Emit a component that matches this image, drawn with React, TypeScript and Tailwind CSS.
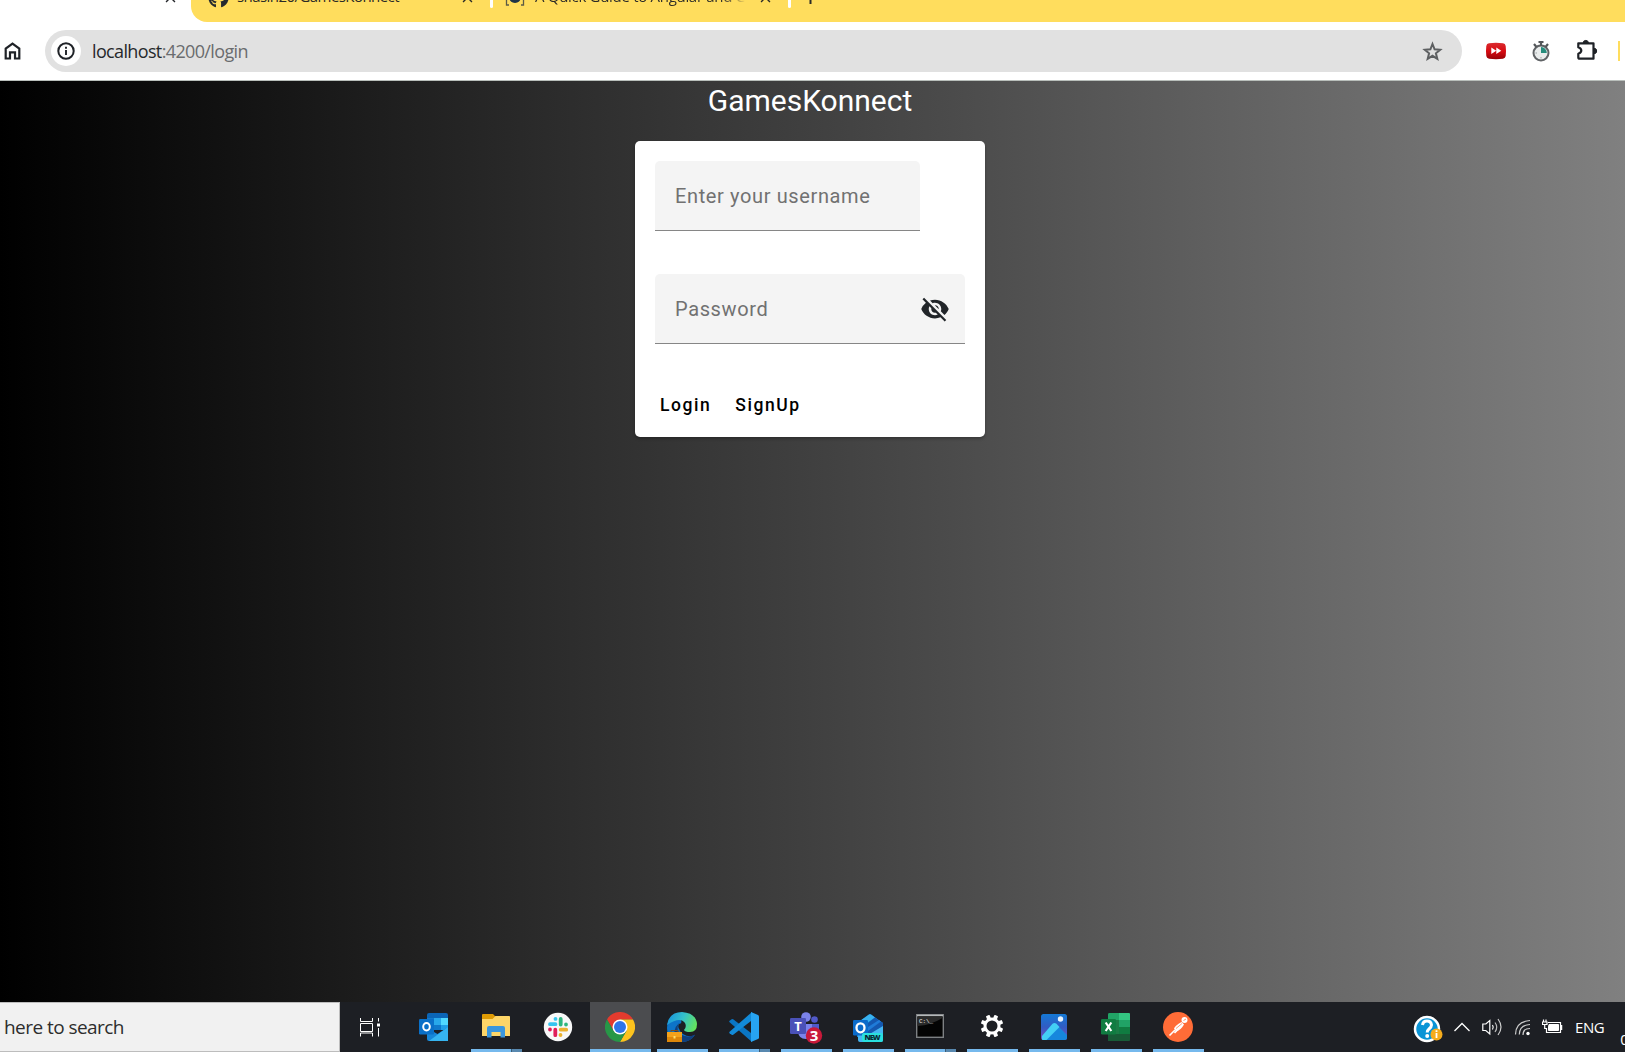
import React from "react";
import { MdClose, MdVisibilityOff } from "react-icons/md";
import { FaGithub } from "react-icons/fa";

function HomeIcon() {
  return (
    <svg width="18" height="20" viewBox="0 0 18 20" fill="none" stroke="#1f2227" strokeWidth="2.2">
      <path d="M1.700 17.500V7.500L8.500 2.500l6.800 5v10h-4.300v-6.200H6v6.200z" />
    </svg>
  );
}

function InfoIcon() {
  return (
    <svg width="18" height="18" viewBox="0 0 18 18">
      <circle cx="9" cy="9" r="7.700" fill="none" stroke="#1f2227" strokeWidth="2" />
      <path d="M9 8v5M9 4.800v1.900" stroke="#1f2227" strokeWidth="1.900" />
    </svg>
  );
}

function StarIcon() {
  return (
    <svg width="21" height="21" viewBox="0 0 21 21" fill="none" stroke="#5d5f61" strokeWidth="2">
      <path d="M10.500 3l2.100 5.300 5.600.4-4.300 3.600 1.400 5.500-4.800-3-4.800 3 1.400-5.500-4.300-3.600 5.600-.4z" />
    </svg>
  );
}

function SkipAdIcon() {
  return (
    <svg width="22" height="18" viewBox="0 0 22 18">
      <defs>
        <linearGradient id="skip" x1="0" y1="0" x2="0" y2="1">
          <stop offset="0" stopColor="#d92b2f" />
          <stop offset=".5" stopColor="#d90b12" />
          <stop offset="1" stopColor="#980207" />
        </linearGradient>
      </defs>
      <path d="M4 1.300Q11 .4 18 1.300q2.400.3 2.700 2.700.6 5 0 10-.3 2.300-2.700 2.700-7 .9-14 0Q1.600 16.300 1.300 14q-.6-5 0-10Q1.600 1.600 4 1.300z" fill="url(#skip)" />
      <path d="M6.300 5.500v6.400l5-3.200zM11.300 5.500v6.400l5-3.200z" fill="#fff" />
    </svg>
  );
}

function TimerIcon() {
  return (
    <svg width="20" height="22" viewBox="0 0 20 22">
      <circle cx="10" cy="13" r="7.500" fill="#e9ecec" stroke="#606366" strokeWidth="2" />
      <path d="M10 7v6h5.800A6 6 0 0 0 10 7z" fill="#258c7c" />
      <path d="M7.500 2h5M10 2v4M3 4l2.500 3M17 4l-2.500 3" stroke="#54575a" strokeWidth="2.200" />
      <path d="M10 17v1.500M4.500 13H6" stroke="#9da2a4" strokeWidth="1" />
    </svg>
  );
}

function PuzzleIcon() {
  return (
    <svg width="22" height="22" viewBox="0 0 22 22">
      <path d="M2.300 4.300h15.200v15.400H3.600q-1.300 0-1.300-1.300v-3.600c4-1.600 4-5 0-6.600z" fill="none" stroke="#1f2227" strokeWidth="2.200" strokeLinejoin="round" />
      <path d="M7.200 4a2.600 2.600 0 0 1 5.200 0zM18 9.300a2.700 2.700 0 0 1 0 5.400z" fill="#1f2227" stroke="#1f2227" />
    </svg>
  );
}

function OutlookIcon() {
  return (
    <svg width="30" height="28" viewBox="0 0 30 28">
      <path d="M8 2q0-2 2-2h17q2 0 2 2v13H8z" fill="#0b65b6" />
      <path d="M8 5h7v7H8z" fill="#1179cc" />
      <path d="M15 5h7v7h-7z" fill="#28a8ea" />
      <path d="M22 5h7v7h-7z" fill="#50d9ff" />
      <path d="M15 12h7v5h-7z" fill="#0f78ca" />
      <path d="M22 12h7v5h-7z" fill="#20a0e8" />
      <path d="M8 15l10.500 6L29 14v14H10q-2 0-2-2z" fill="#1686d8" />
      <path d="M29 14v14H10z" fill="#36b4f0" />
      <rect y="6" width="15" height="15.500" rx="1.300" fill="#0a70c8" />
      <ellipse cx="7.500" cy="13.800" rx="3.300" ry="3.700" fill="none" stroke="#fff" strokeWidth="2" />
    </svg>
  );
}

function FolderIcon() {
  return (
    <svg width="28" height="24" viewBox="0 0 28 24">
      <path d="M0 1q0-1 1-1h10l2.500 2.500H27q1 0 1 1V12H0z" fill="#df9b04" />
      <path d="M0 5h10.500L13.500 2H27q1 0 1 1v19H0z" fill="#fdd568" />
      <path d="M5 23.500V14q0-2 2-2h14q2 0 2 2v9.500h-4.500V18h-9v5.500z" fill="#3a96dd" />
    </svg>
  );
}

function SlackIcon() {
  return (
    <svg width="30" height="30" viewBox="0 0 30 30">
      <circle cx="15" cy="15" r="14.200" fill="#f8f8f8" />
      <g fill="none" strokeWidth="3.800" strokeLinecap="round">
        <path d="M7 12.200h5.500M12.500 6.800v.1" stroke="#36c5f0" />
        <path d="M17.700 7v5.500M23 12.500v.1" stroke="#2eb67d" />
        <path d="M17.700 17.700h5.500M17.500 23v.1" stroke="#ecb22e" />
        <path d="M12.300 17.700v5.500M7 17.500v.1" stroke="#e01e5a" />
      </g>
    </svg>
  );
}

function ChromeIcon() {
  return (
    <svg width="30" height="30" viewBox="0 0 30 30">
      <path d="M2 7.500A15 15 0 0 1 28 7.500H15L8.500 18.700z" fill="#e33b2e" />
      <path d="M28 7.500A15 15 0 0 1 15 30l6.500-11.300L15 7.500z" fill="#fcc31e" />
      <path d="M15 30A15 15 0 0 1 2 7.500l6.500 11.200h13z" fill="#279747" />
      <circle cx="15" cy="15" r="7.500" fill="#fff" />
      <circle cx="15" cy="15" r="6" fill="#2e75e8" />
    </svg>
  );
}

function EdgeIcon() {
  return (
    <svg width="32" height="31" viewBox="0 0 32 31">
      <defs>
        <linearGradient id="edgeTop" x1="0" y1=".3" x2="1" y2=".6">
          <stop offset="0" stopColor="#1996de" />
          <stop offset=".5" stopColor="#35c1c9" />
          <stop offset="1" stopColor="#65e35b" />
        </linearGradient>
      </defs>
      <path d="M1 17Q1 7 9 7q8 0 6 6-4 6 2 10 6 4 12 1-5 7-13 7Q1 31 1 17z" fill="#0d74c8" />
      <path d="M13 12q-4 8 3 12 6 3 13-.5-4 7.500-13 7.500Q7 29 8.500 20q1-5 4.500-8z" fill="#103f7c" />
      <path d="M1 14Q3 1 16 1q14 1 15 12 0 8-7 8-5 0-6-2 3-3 1-7-5-7-18 2z" fill="url(#edgeTop)" />
      <circle cx="15.500" cy="15.500" r="3.200" fill="#1d1f24" />
      <rect x="1" y="21" width="15" height="10" fill="#dd8709" />
      <path d="M1 21h15v5H1z" fill="#f3a21b" />
      <path d="M5 21v-1.500h7V21" fill="none" stroke="#80511a" />
      <rect x="7.500" y="25" width="2" height="2.500" fill="#ffe06a" />
    </svg>
  );
}

function VsCodeIcon() {
  return (
    <svg width="30" height="30" viewBox="0 0 30 30">
      <path d="M.6 8.800l2-1.600q.8-.5 1.600 0L23 21.800V30L.6 10.300q-.8-.8 0-1.500z" fill="#0a76c4" />
      <path d="M.6 21.200l2 1.600q.8.5 1.600 0L23 8.200V0L.6 19.700q-.8.800 0 1.500z" fill="#128ad8" />
      <path d="M22 0l7 3q1 .5 1 1.600v20.800q0 1.100-1 1.600l-7 3z" fill="#27a4f2" />
    </svg>
  );
}

function TeamsIcon() {
  return (
    <svg width="34" height="32" viewBox="0 0 34 32">
      <circle cx="24.500" cy="7.500" r="3.300" fill="#5059c9" />
      <circle cx="16" cy="5" r="4.800" fill="#7b83eb" />
      <path d="M20 12h9v9q0 5-5 5h-4z" fill="#5059c9" />
      <path d="M8 12h14v9q0 6-6.500 6T8 20z" fill="#7b83eb" />
      <rect x="0" y="6" width="16" height="16" rx="1.300" fill="#4a51b8" />
      <text x="8" y="18.500" textAnchor="middle" fontSize="13" fontWeight="700" fill="#fff" fontFamily="Open Sans, sans-serif">T</text>
      <circle cx="24" cy="23.500" r="8.200" fill="#c8193a" />
      <text x="24" y="29" textAnchor="middle" fontSize="15" fontWeight="700" fill="#fff" fontFamily="Open Sans, sans-serif">3</text>
    </svg>
  );
}

function OutlookNewIcon() {
  return (
    <svg width="30" height="28" viewBox="0 0 30 28">
      <path d="M4 9L16 .6q1-.6 2 0L30 9v14H4z" fill="#1683d8" />
      <path d="M4 9L16 .6q1-.6 2 0l4 2.800L8 13z" fill="#38b2ef" />
      <path d="M22 3.400L30 9v4L15 22V9z" fill="#1458b0" />
      <path d="M15 13l11-7 2 1.500L15 17z" fill="#1f7bd8" />
      <path d="M15 21l15-9v14q0 2-2 2H7q-2 0-2-2v-5z" fill="#45b5f2" />
      <rect y="6" width="15" height="15.500" rx="1.300" fill="#0b6bca" />
      <ellipse cx="7.500" cy="13.800" rx="4" ry="4.500" fill="none" stroke="#fff" strokeWidth="2.300" />
      <rect x="9" y="19" width="21" height="9" rx="2" fill="#29dfdf" />
      <text x="19.500" y="26.300" textAnchor="middle" fontSize="7.500" fontWeight="800" fill="#092a38" fontFamily="Open Sans, sans-serif" textLength="16">NEW</text>
    </svg>
  );
}

function TerminalIcon() {
  return (
    <svg width="28" height="24" viewBox="0 0 28 24">
      <rect x=".7" y=".7" width="26.600" height="22.600" fill="#040404" stroke="#7d8083" strokeWidth="1.400" />
      <path d="M1 1.500h26" stroke="#b5b8ba" strokeWidth="1.500" />
      <path d="M1.500 12Q15 11 26.500 4V3h-25z" fill="#2b2b2b" />
      <text x="3" y="8.500" fontSize="6" fill="#eee" fontFamily="Liberation Mono, monospace" textLength="14">C:\_</text>
    </svg>
  );
}

function GearIcon() {
  return (
    <svg width="24" height="24" viewBox="-12 -12 24 24">
      <circle r="7" fill="none" stroke="#fff" strokeWidth="3" />
      <g fill="#fff">
        {[22.5, 67.5, 112.5, 157.5, 202.5, 247.5, 292.5, 337.5].map((a) => (
          <rect key={a} x="-2" y="-11.300" width="4" height="4.500" rx=".8" transform={`rotate(${a})`} />
        ))}
      </g>
    </svg>
  );
}

function PhotosIcon() {
  return (
    <svg width="26" height="26" viewBox="0 0 26 26">
      <defs>
        <linearGradient id="photo" x1="0" y1="0" x2="0" y2="1">
          <stop offset="0" stopColor="#1479d5" />
          <stop offset=".5" stopColor="#315cc4" />
          <stop offset="1" stopColor="#7a50bd" />
        </linearGradient>
        <clipPath id="photoClip">
          <rect width="26" height="26" rx="2.500" />
        </clipPath>
      </defs>
      <g clipPath="url(#photoClip)">
        <rect width="26" height="26" fill="url(#photo)" />
        <path d="M1 25L12 10q1.500-1.300 3 0L27 22v5H1z" fill="#1687dd" />
        <path d="M1 22L11.500 9.800q2-1.800 4 0L18.500 13 5 26.500H1z" fill="#43cff5" />
      </g>
      <circle cx="19.500" cy="5" r="2.700" fill="#e8f4ff" />
    </svg>
  );
}

function ExcelIcon() {
  return (
    <svg width="30" height="28" viewBox="0 0 30 28">
      <path d="M7 1.500Q7 0 8.500 0H18v28H8.500Q7 28 7 26.500z" fill="#1b7c46" />
      <path d="M7 1.500Q7 0 8.500 0H18v7H7z" fill="#21a366" />
      <path d="M18 0h10q1 0 1 1v6H18z" fill="#33c481" />
      <path d="M18 7h11v7H18z" fill="#21a366" />
      <path d="M18 14h11v7H18z" fill="#107c41" />
      <path d="M7 21h22v6q0 1-1 1H8.500Q7 28 7 26.500z" fill="#185c37" />
      <rect y="6" width="15" height="15.500" rx="1.300" fill="#107c41" />
      <path d="M4.700 9.500l5.600 8.500M10.300 9.500l-5.600 8.500" stroke="#fff" strokeWidth="2.200" />
    </svg>
  );
}

function PostmanIcon() {
  return (
    <svg width="30" height="30" viewBox="0 0 30 30">
      <circle cx="15" cy="15" r="15" fill="#ff6c37" />
      <circle cx="21.500" cy="8" r="3" fill="#fff" />
      <path d="M11 16.500q1-3 7.500-6.500l2.500 2.500q-3 5.500-8 7z" fill="#fff" />
      <path d="M12 18l-5.500 5.500M18 14.500l-6.500 6.500" stroke="#fff" strokeWidth="1.600" />
      <path d="M13 16.500l6-5" stroke="#ff6c37" strokeWidth=".7" />
      <path d="M20.500 8.500l2.500-1.500" stroke="#ff6c37" strokeWidth=".8" />
    </svg>
  );
}

type TaskItem = { name: string; icon: React.ReactNode; state: "idle" | "open" | "multi" | "active"; nudge?: string };

const tasks: TaskItem[] = [
  { name: "Outlook", icon: <OutlookIcon />, state: "idle", nudge: "pr-[1px]" },
  { name: "File Explorer", icon: <FolderIcon />, state: "multi", nudge: "pb-[2px]" },
  { name: "Slack", icon: <SlackIcon />, state: "idle" },
  { name: "Chrome", icon: <ChromeIcon />, state: "active", nudge: "pr-[1px]" },
  { name: "Edge", icon: <EdgeIcon />, state: "open" },
  { name: "VS Code", icon: <VsCodeIcon />, state: "multi" },
  { name: "Teams", icon: <TeamsIcon />, state: "open", nudge: "pt-[4px] pl-[2px]" },
  { name: "Outlook New", icon: <OutlookNewIcon />, state: "open", nudge: "pt-[4px]" },
  { name: "Terminal", icon: <TerminalIcon />, state: "multi", nudge: "pb-[1px] pr-[1px]" },
  { name: "Settings", icon: <GearIcon />, state: "open", nudge: "pb-[1px] pr-[1px]" },
  { name: "Photos", icon: <PhotosIcon />, state: "open" },
  { name: "Excel", icon: <ExcelIcon />, state: "open" },
  { name: "Postman", icon: <PostmanIcon />, state: "open" },
];

function TaskButton({ item }: { item: TaskItem }) {
  const active = item.state === "active";
  return (
    <div className={`flex w-[62px] shrink-0 flex-col ${active ? "border-l border-[#1d1f23] bg-[#4b4c4f]" : ""}`} title={item.name}>
      <div className={`flex h-[47px] items-center justify-center pt-[2px] ${item.nudge ?? ""}`}>{item.icon}</div>
      {active && <div className="h-[3px] bg-[#76b9ed]" />}
      {item.state === "open" && <div className="ml-[6px] h-[3px] w-[51px] bg-[#76b9ed]" />}
      {item.state === "multi" && (
        <div className="ml-[6px] flex h-[3px] w-[51px]">
          <div className="w-[40px] bg-[#76b9ed]" />
          <div className="w-[11px] border-l border-[#3c5c75] bg-[#5888af]" />
        </div>
      )}
    </div>
  );
}

function TabStrip() {
  return (
    <div className="flex h-[22px] items-end overflow-hidden bg-white">
      <div className="flex h-[50px] w-[191px] shrink-0 items-center pl-[162px]">
        <MdClose size={17} className="text-[#24262a]" />
      </div>
      <div className="flex h-[50px] flex-1 items-center rounded-bl-[16px] bg-[#ffdd5d] font-['Open_Sans','Noto_Sans',sans-serif] text-[15px] text-[#2b2a26]">
        <FaGithub size={21} className="ml-[17px] shrink-0 text-[#24292f]" />
        <span className="ml-[8px] w-[164px] whitespace-nowrap pb-[1px] tracking-[-0.56px]">shasin20/GamesKonnect</span>
        <MdClose size={17} className="ml-[58px] shrink-0" />
        <div className="ml-[14px] h-[22px] w-[3px] shrink-0 rounded bg-white" />
        <svg className="ml-[12px] shrink-0" width="20" height="18" viewBox="0 0 20 18">
          <path d="M4 1H1.500v16H4M16 1h2.500v16H16" fill="none" stroke="#5d5b45" strokeWidth="1.300" />
          <circle cx="10" cy="9" r="6" fill="#203447" />
        </svg>
        <span className="ml-[10px] w-[211px] overflow-hidden whitespace-nowrap bg-gradient-to-r from-[#2b2a26] from-88% to-[#ffdd5d] bg-clip-text pb-[1px] tracking-[-0.3px] text-transparent">
          A Quick Guide to Angular and C
        </span>
        <MdClose size={17} className="ml-[11px] shrink-0" />
        <div className="ml-[14px] h-[22px] w-[3px] shrink-0 rounded bg-white" />
        <svg className="ml-[13px] shrink-0" width="13" height="13" viewBox="0 0 13 13">
          <path d="M6.500 0v13M0 6.500h13" stroke="#2b2a26" strokeWidth="2" />
        </svg>
      </div>
    </div>
  );
}

function Toolbar() {
  return (
    <div className="flex h-[59px] items-center border-b border-[#b9bfbb] bg-white">
      <div className="ml-[4px] w-[41px] shrink-0">
        <HomeIcon />
      </div>
      <div className="flex h-[42px] w-[1417px] shrink-0 items-center rounded-full bg-[#e1e1e1] pl-[6px] pr-[19px]">
        <div className="flex size-[30px] items-center justify-center rounded-full bg-white">
          <InfoIcon />
        </div>
        <span className="ml-[11px] flex-1 whitespace-nowrap font-['Open_Sans','Noto_Sans',sans-serif] text-[18px] tracking-[-0.64px] text-[#6a6c6e]">
          <span className="text-[#26282b]">localhost</span>:4200/login
        </span>
        <StarIcon />
      </div>
      <div className="ml-[23px]"><SkipAdIcon /></div>
      <div className="ml-[24px]"><TimerIcon /></div>
      <div className="ml-[25px] pb-[2px]"><PuzzleIcon /></div>
      <div className="ml-[20px] h-[20px] w-[2px] shrink-0 bg-[#ffdd5d]" />
    </div>
  );
}

function LoginPage() {
  return (
    <main className="flex flex-1 flex-col items-center bg-[linear-gradient(to_right,#000,#808080)] pr-[5px] font-['Roboto',sans-serif]">
      <h1 className="h-[60px] whitespace-nowrap text-[30px] leading-[39px] text-white">GamesKonnect</h1>
      <form className="flex h-[296px] w-[350px] flex-col rounded-[5px] bg-white px-[20px] pt-[20px] shadow-[0_2px_3px_rgba(0,0,0,0.25)]">
        <div className="flex h-[70px] w-[265px] items-center rounded-t-[5px] border-b border-[#868686] bg-[#f4f4f4] px-[20px] text-[20px] tracking-[0.625px] text-[#717171]">
          Enter your username
        </div>
        <div className="mt-[43px] flex h-[70px] items-center justify-between rounded-t-[5px] border-b border-[#868686] bg-[#f4f4f4] pl-[20px] pr-[15px] text-[20px] tracking-[0.625px] text-[#717171]">
          Password
          <MdVisibilityOff size={30} className="text-[#212529]" />
        </div>
        <div className="mt-[48px] flex h-[26px] items-center gap-[24px] pl-[5px] text-[17.5px] font-medium leading-[26px] tracking-[1.5625px] text-black">
          <span>Login</span>
          <span>SignUp</span>
        </div>
      </form>
    </main>
  );
}

function Tray() {
  return (
    <div className="ml-auto flex w-[212px] shrink-0 items-center text-white">
      <svg className="mt-[3px] shrink-0" width="31" height="28" viewBox="0 0 31 28">
        <circle cx="14" cy="14" r="12" fill="#0a94d6" stroke="#fff" strokeWidth="2.500" />
        <path d="M9.500 10q.5-4 4.500-4t4.500 4q0 2-2.500 4-1.800 1.500-1.800 3.500" fill="none" stroke="#fff" strokeWidth="3" />
        <circle cx="14.200" cy="21" r="2" fill="#fff" />
        <circle cx="23.500" cy="19.500" r="6" fill="#f6ac1c" />
        <path d="M23.500 18v5M23.500 15.300v1.700" stroke="#fff" strokeWidth="1.800" />
      </svg>
      <svg className="ml-[10px] shrink-0" width="16" height="10" viewBox="0 0 16 10" fill="none" stroke="#fff" strokeWidth="1.300">
        <path d="M.5 9L8 1.500 15.500 9" />
      </svg>
      <svg className="ml-[12px] shrink-0" width="21" height="18" viewBox="0 0 21 18" fill="none" stroke="#fff" strokeWidth="1.200">
        <path d="M.8 6v6.500h3l4 3.500V2.500L3.800 6z" />
        <path d="M10.500 7q1.500 2.200 0 4.500" />
        <path d="M13 4.500q3.500 4.700 0 9.500" stroke="#bbb" />
        <path d="M16 1q6 8 0 16" stroke="#ccc" />
      </svg>
      <svg className="ml-[11px] shrink-0" width="17" height="17" viewBox="0 0 17 17" fill="none" stroke="#ccc" strokeWidth="1.200">
        <path d="M1.500 15.500Q1.500 2.500 16 1.500M5.300 15.500Q5.500 6 16 5.500M9 16q0-6.500 7-6.500" />
        <circle cx="14" cy="14.500" r="1.700" fill="#fff" stroke="none" />
      </svg>
      <svg className="ml-[11px] shrink-0" width="21" height="16" viewBox="0 0 21 16" fill="none" stroke="#fff">
        <path d="M6 3.500h12.500v10h-14V9" strokeWidth="1.200" />
        <path d="M7 5.500h9.500v6H6.500V8z" fill="#fff" />
        <path d="M19.500 6v5" strokeWidth="1.500" />
        <path d="M1.500.5v3M4 .5v3M.5 3h4.500v2.500H.5zM2.700 5v4.500H5" strokeWidth="1.200" />
      </svg>
      <span className="ml-[12px] font-['Open_Sans','Noto_Sans',sans-serif] text-[15px] tracking-[-0.4px]">ENG</span>
      <span className="ml-[16px] mt-[24px] w-[6px] shrink-0 overflow-hidden font-['Open_Sans',sans-serif] text-[15px] leading-[18px]">0</span>
    </div>
  );
}

function Taskbar() {
  return (
    <footer className="flex h-[50px] shrink-0 overflow-hidden bg-[#1d1f24]">
      <div className="flex w-[340px] shrink-0 items-center border-y border-r border-[#bdbdbd] bg-[#f1f1f1] pl-[4px] font-['Open_Sans','Noto_Sans',sans-serif] text-[19px] tracking-[-0.55px] text-[#2d2d2d]">
        here to search
      </div>
      <div className="flex w-[63px] shrink-0 items-center pl-[20px]">
        <svg width="21" height="20" viewBox="0 0 21 20" fill="none" stroke="#fff" strokeWidth="1">
          <path d="M.5 1v3.500h12V1M.5 19.500V16h12v3.500M.5 6.500h12v8H.5zM18.500 1v3.500M18.500 11v8.500" />
          <path d="M17 6.500h3v3h-3z" fill="#fff" stroke="none" />
        </svg>
      </div>
      {tasks.map((item) => (
        <TaskButton key={item.name} item={item} />
      ))}
      <Tray />
    </footer>
  );
}

export default function App() {
  return (
    <div className="flex h-[1052px] w-[1625px] flex-col overflow-hidden">
      <TabStrip />
      <Toolbar />
      <LoginPage />
      <Taskbar />
    </div>
  );
}
